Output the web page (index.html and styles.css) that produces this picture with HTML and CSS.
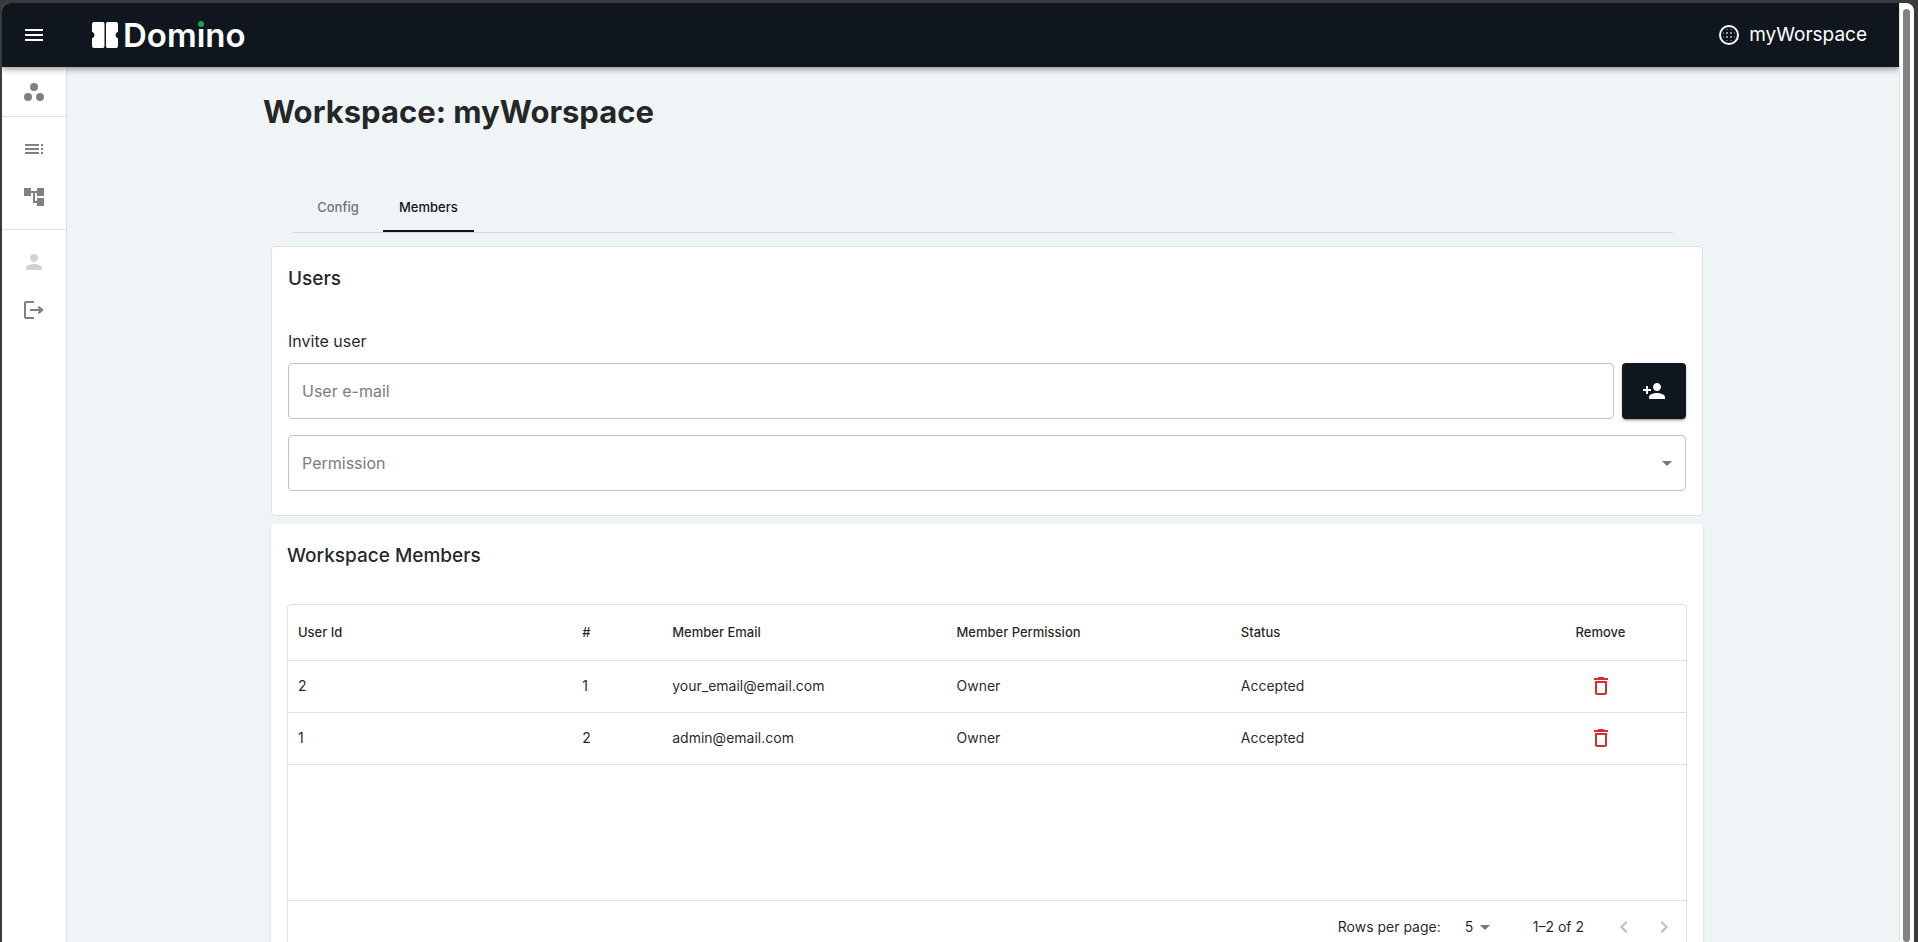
FILE: index.html
```html
<!DOCTYPE html>
<html lang="en">
<head>
<meta charset="utf-8">
<title>Domino</title>
<link rel="stylesheet" href="styles.css">
</head>
<body>
<div class="window">
  <div class="app">
    <header class="appbar">
      <button class="icon-btn menu" aria-label="Open menu">
        <svg class="icon" viewBox="0 0 24 24"><path d="M3 18h18v-2H3v2zm0-5h18v-2H3v2zm0-7v2h18V6H3z"/></svg>
      </button>
      <a class="brand" href="#">
        <svg class="brand-mark" viewBox="0 0 26 26"><path d="M2 0h9q1.500 0 1.500 2v22q0 2-1.500 2H2q-2 0-2-2v-7.500q2.500-1.500 2.500-3.500T0 9.500V2q0-2 2-2zM15.500 0H24q2 0 2 2v7.500q-2.500 1.500-2.500 3.500t2.500 3.500V24q0 2-2 2h-8.500q-1.500 0-1.500-2V2q0-2 1.500-2z"/></svg>
        <span class="brand-name">Dom<span class="brand-i">ı</span>no</span>
      </a>
      <div class="workspace">
        <svg class="icon" viewBox="0 0 24 24"><circle class="ring" cx="12" cy="12" r="9"/><path class="dots" d="M9 9h2v2H9zM13 9h2v2h-2zM9 13h2v2H9zM13 13h2v2h-2z"/><path class="dots-faint" d="M9 6h2v1H9zM13 6h2v1h-2zM6 9h1v2H6zM6 13h1v2H6zM17 9h1v2h-1zM17 13h1v2h-1zM9 17h2v1H9zM13 17h2v1h-2z"/></svg>
        <span>myWorspace</span>
      </div>
    </header>
    <div class="body">
      <nav class="sidebar">
        <div class="nav-group">
          <a class="nav-link" href="#" aria-label="Workspaces"><svg class="icon" viewBox="0 0 24 24"><circle cx="12" cy="7" r="4"/><circle cx="6" cy="17" r="4"/><circle cx="18" cy="17" r="4"/></svg></a>
        </div>
        <div class="nav-group">
          <a class="nav-link" href="#" aria-label="Workflows"><svg class="icon" viewBox="0 0 24 24"><path d="M3 9h14V7H3v2zm0 4h14v-2H3v2zm0 4h14v-2H3v2zm16 0h2v-2h-2v2zm0-10v2h2V7h-2zm0 6h2v-2h-2v2z"/></svg></a>
          <a class="nav-link" href="#" aria-label="Workflow editor"><svg class="icon" viewBox="0 0 24 24"><path d="M22 11V3h-7v3H9V3H2v8h7V8h2v10h4v3h7v-8h-7v3h-2V8h2v3z"/></svg></a>
        </div>
        <div class="nav-group">
          <a class="nav-link disabled" href="#" aria-label="Profile"><svg class="icon" viewBox="0 0 24 24"><path d="M12 12c2.210 0 4-1.790 4-4s-1.790-4-4-4-4 1.790-4 4 1.790 4 4 4zm0 2c-2.670 0-8 1.340-8 4v2h16v-2c0-2.660-5.330-4-8-4z"/></svg></a>
          <a class="nav-link" href="#" aria-label="Log out"><svg class="icon" viewBox="0 0 24 24"><path d="M17 8l-1.410 1.410L17.170 11H8v2h9.170l-1.580 1.580L17 16l5-4zM4 5h8V3H4c-1.100 0-2 .9-2 2v14c0 1.100.9 2 2 2h8v-2H4V5z"/></svg></a>
        </div>
      </nav>
      <main class="main">
        <div class="container">
          <h1 class="title">Workspace: myWorspace</h1>
          <div class="tabs" role="tablist">
            <button class="tab" role="tab" aria-selected="false">Config</button>
            <button class="tab active" role="tab" aria-selected="true">Members</button>
          </div>
          <section class="card outlined">
            <h2 class="card-title">Users</h2>
            <form class="invite">
              <label class="label" for="email">Invite user</label>
              <div class="invite-row">
                <input class="field" id="email" type="email" placeholder="User e-mail">
                <button class="add" type="button" aria-label="Invite user">
                  <svg class="icon" viewBox="0 0 24 24"><path d="M15 12c2.210 0 4-1.790 4-4s-1.790-4-4-4-4 1.790-4 4 1.790 4 4 4zm-9-2V7H4v3H1v2h3v3h2v-3h3v-2H6zm9 4c-2.670 0-8 1.340-8 4v2h16v-2c0-2.660-5.330-4-8-4z"/></svg>
                </button>
              </div>
              <div class="select-wrap">
                <select class="field" aria-label="Permission"><option>Permission</option></select>
                <svg class="icon arrow" viewBox="0 0 24 24"><path d="M7 10l5 5 5-5z"/></svg>
              </div>
            </form>
          </section>
          <section class="card raised">
            <h2 class="card-title">Workspace Members</h2>
            <div class="grid">
              <table class="table">
                <colgroup><col><col class="col-index"><col><col><col><col class="col-remove"></colgroup>
                <thead>
                  <tr><th>User Id</th><th>#</th><th>Member Email</th><th>Member Permission</th><th>Status</th><th class="center">Remove</th></tr>
                </thead>
                <tbody>
                  <tr><td>2</td><td>1</td><td>your_email@email.com</td><td>Owner</td><td>Accepted</td><td class="center"><button class="icon-btn remove" aria-label="Remove your_email@email.com"><svg class="icon" viewBox="0 0 24 24"><path d="M6 19c0 1.100.9 2 2 2h8c1.100 0 2-.9 2-2V7H6v12zM8 9h8v10H8V9zm7.500-5l-1-1h-5l-1 1H5v2h14V4z"/></svg></button></td></tr>
                  <tr><td>1</td><td>2</td><td>admin@email.com</td><td>Owner</td><td>Accepted</td><td class="center"><button class="icon-btn remove" aria-label="Remove admin@email.com"><svg class="icon" viewBox="0 0 24 24"><path d="M6 19c0 1.100.9 2 2 2h8c1.100 0 2-.9 2-2V7H6v12zM8 9h8v10H8V9zm7.500-5l-1-1h-5l-1 1H5v2h14V4z"/></svg></button></td></tr>
                </tbody>
              </table>
              <div class="pager">
                <label for="rows">Rows per page:</label>
                <div class="rows-wrap">
                  <select class="rows" id="rows"><option>5</option></select>
                  <svg class="icon arrow" viewBox="0 0 24 24"><path d="M7 10l5 5 5-5z"/></svg>
                </div>
                <span class="range">1–2 of 2</span>
                <button class="icon-btn page" aria-label="Previous page" disabled><svg class="icon" viewBox="0 0 24 24"><path d="M15.410 7.410L14 6l-6 6 6 6 1.410-1.410L10.830 12z"/></svg></button>
                <button class="icon-btn page" aria-label="Next page" disabled><svg class="icon" viewBox="0 0 24 24"><path d="M10 6L8.590 7.410 13.170 12l-4.580 4.590L10 18l6-6z"/></svg></button>
              </div>
            </div>
          </section>
        </div>
      </main>
    </div>
  </div>
  <div class="scrollbar"><div class="thumb"></div></div>
</div>
</body>
</html>
```
FILE: styles.css
```css
* { box-sizing: border-box; }

body {
  margin: 0;
  height: 100vh;
  overflow: hidden;
  background: #3a3a3a;
  color: rgba(0, 0, 0, 0.87);
  font-family: Inter, "Open Sans", sans-serif;
}

button, input, select { font: inherit; color: inherit; }
a { color: inherit; text-decoration: none; }

.window {
  display: flex;
  height: 100vh;
  padding: 3px 4px 0 2px;
  overflow: hidden;
}

.app {
  flex: 1;
  display: flex;
  flex-direction: column;
  min-width: 0;
  background: #eff4f7;
  border-top-left-radius: 8px;
  overflow: hidden;
}

.scrollbar {
  width: 15px;
  padding: 6px 4px 0 3px;
  background: #fff;
  border-left: 1px solid #e5e5e5;
  border-top-right-radius: 8px;
}

.thumb {
  height: 100%;
  border-radius: 4px;
  background: #828282;
}

.icon { width: 24px; height: 24px; fill: currentColor; display: block; }

.icon-btn {
  display: inline-flex;
  padding: 0;
  border: 0;
  background: none;
}

.appbar {
  position: relative;
  flex: none;
  display: flex;
  align-items: center;
  height: 64px;
  padding: 0 32px 0 20px;
  background: #0f161e;
  color: #fff;
  box-shadow: 0 2px 4px -1px rgba(0, 0, 0, 0.2), 0 4px 5px rgba(0, 0, 0, 0.14), 0 1px 10px rgba(0, 0, 0, 0.12);
}

.brand { display: flex; align-items: center; gap: 5px; margin-left: 46px; }
.brand-mark { width: 26px; height: 26px; fill: #fff; }
.brand-name { font-size: 33px; line-height: 34px; font-weight: 600; }
.brand-i { position: relative; }

.brand-i::after {
  content: "";
  position: absolute;
  top: 6px;
  left: calc(50% - 3px);
  width: 6px;
  height: 6px;
  border-radius: 50%;
  background: #1fa24a;
}

.workspace {
  display: flex;
  align-items: center;
  gap: 8px;
  margin-left: auto;
  font-size: 19px;
  line-height: 32px;
}

.ring { fill: none; stroke: #fff; stroke-width: 2px; }
.dots { fill: #8e979e; }
.dots-faint { fill: #58616a; }

.body { flex: 1; display: flex; min-height: 0; }

.sidebar {
  flex: none;
  width: 65px;
  background: #fff;
  border-right: 1px solid #e0e0e0;
  color: #818181;
}

.nav-group { padding: 8px 0; border-bottom: 1px solid #e0e0e0; }
.nav-group:first-child { padding: 1px 0 0; }
.nav-group:last-child { border-bottom: 0; }

.nav-link {
  display: flex;
  align-items: center;
  justify-content: center;
  height: 48px;
}

.disabled { color: #d2d2d2; }

.main { flex: 1; min-width: 0; padding: 24px; }
.container { max-width: 1440px; margin: 0 auto; }

.title { margin: 0; font-size: 31px; line-height: 42px; font-weight: 700; }

.tabs {
  display: flex;
  height: 49px;
  margin: 51px 30px 13px;
  border-bottom: 1px solid #d5dade;
}

.tab {
  min-width: 90px;
  height: 48px;
  padding: 0 16px;
  border: 0;
  border-bottom: 2px solid transparent;
  background: none;
  color: #707376;
  font-size: 13px;
  font-weight: 500;
}

.active { color: #0f161e; border-bottom-color: #0f161e; }

.card {
  margin: 0 0 8px 8px;
  padding: 16px 16px 24px;
  background: #fff;
  border-radius: 4px;
}

.outlined { border: 1px solid #e0e0e0; }
.raised { box-shadow: 0 2px 1px -1px rgba(0, 0, 0, 0.2), 0 1px 1px rgba(0, 0, 0, 0.14), 0 1px 3px rgba(0, 0, 0, 0.12); }

.card-title { margin: 0; font-size: 19px; line-height: 32px; font-weight: 500; }

.invite { display: flex; flex-direction: column; gap: 16px; margin-top: 34px; }
.label { font-size: 16px; line-height: 24px; margin-bottom: -6px; }
.invite-row { display: flex; gap: 8px; }

.field {
  flex: 1;
  width: 100%;
  min-width: 0;
  height: 56px;
  padding: 0 13px;
  border: 1px solid #c4c4c4;
  border-radius: 4px;
  background: #fff;
  color: #7c7c7c;
  font-size: 16px;
  appearance: none;
}

.field::placeholder { color: #7c7c7c; opacity: 1; }

.add {
  display: flex;
  align-items: center;
  justify-content: center;
  width: 64px;
  height: 56px;
  border: 0;
  border-radius: 4px;
  background: #0f161e;
  color: #fff;
  box-shadow: 0 3px 1px -2px rgba(0, 0, 0, 0.2), 0 2px 2px rgba(0, 0, 0, 0.14), 0 1px 5px rgba(0, 0, 0, 0.12);
}

.select-wrap, .rows-wrap { position: relative; display: flex; }

.arrow {
  position: absolute;
  top: calc(50% - 12px);
  right: 7px;
  color: #757575;
  pointer-events: none;
}

.grid {
  margin-top: 32px;
  border: 1px solid #e0e0e0;
  border-radius: 4px;
  font-size: 14px;
  line-height: 20px;
}

.table { width: 100%; table-layout: fixed; border-collapse: collapse; margin-bottom: 135px; }
.col-index { width: 90px; }
.col-remove { width: 171px; }

.table th, .table td {
  height: 52px;
  padding: 0 10px;
  border-bottom: 1px solid #e0e0e0;
  text-align: left;
  font-weight: 400;
}

.table th { height: 55px; font-size: 13px; font-weight: 500; }
.table .center { text-align: center; }
.remove { color: #d32f2f; vertical-align: middle; }

.pager {
  display: flex;
  align-items: center;
  justify-content: flex-end;
  height: 53px;
  padding-right: 10px;
  border-top: 1px solid #e0e0e0;
}

.rows-wrap { margin: 0 36px 0 16px; }
.rows-wrap .arrow { right: 0; }

.rows {
  width: 40px;
  height: 24px;
  padding: 0 0 0 8px;
  border: 0;
  background: none;
  appearance: none;
}

.range { margin-right: 28px; }
.page { color: #bdbdbd; }
.page + .page { margin-left: 16px; }
```
